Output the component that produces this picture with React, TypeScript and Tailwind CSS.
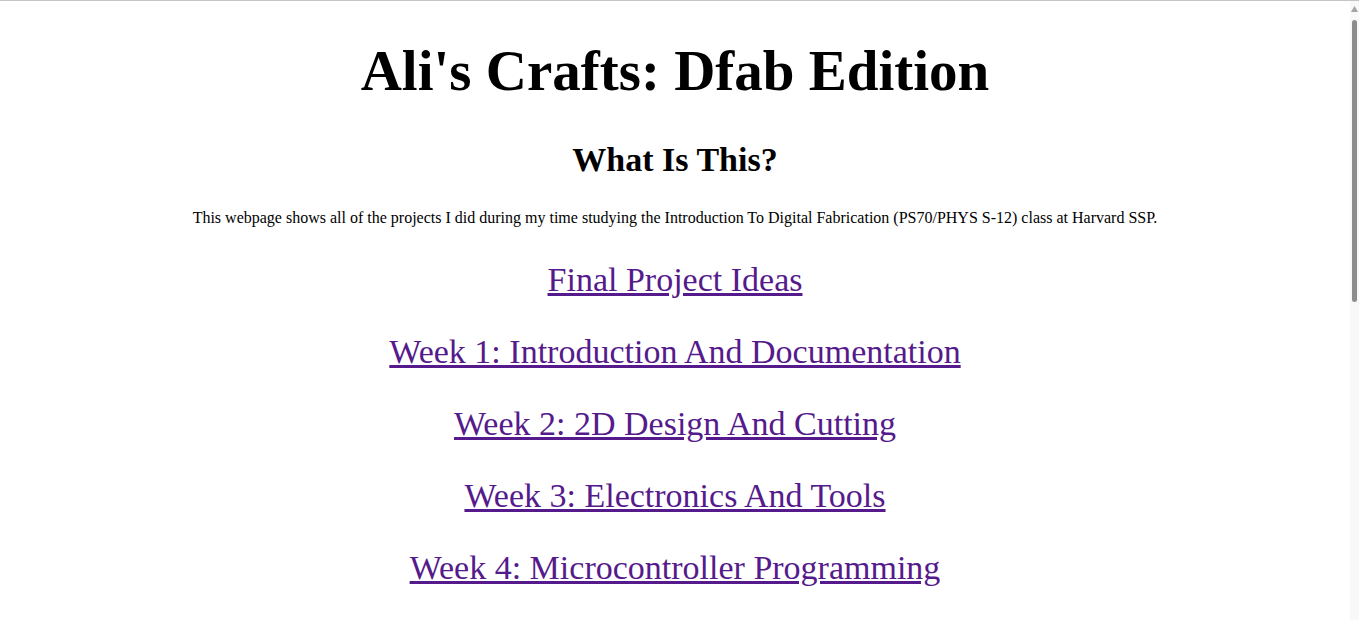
import React from 'react';

const links = [
  'Final Project Ideas',
  'Week 1: Introduction And Documentation',
  'Week 2: 2D Design And Cutting',
  'Week 3: Electronics And Tools',
  'Week 4: Microcontroller Programming',
];

export default function App() {
  return (
    <div className="h-[620px] overflow-hidden bg-white flex flex-col font-['Liberation_Serif','Times_New_Roman',serif] text-black">
      {/* browser edge line */}
      <div className="h-px bg-[#c4c4c4]" />
      <div className="flex flex-1 min-h-0">
        <main className="flex-1 text-center">
          <h1 className="mt-[34px] text-[57px] leading-[72px] font-bold">Ali's Crafts: Dfab Edition</h1>
          <h2 className="mt-[33px] text-[34px] leading-[40px] font-bold">What Is This?</h2>
          <p className="mt-[28px] text-[16px] leading-[20px]">
            This webpage shows all of the projects I did during my time studying the Introduction To Digital
            Fabrication (PS70/PHYS S-12) class at Harvard SSP.
          </p>
          <div className="mt-[32px] flex flex-col items-center gap-[32px]">
            {links.map(name => (
              <a key={name} href="#" className="text-[34px] leading-[40px] text-[#551a8b] underline">
                {name}
              </a>
            ))}
          </div>
        </main>
        {/* scrollbar */}
        <div className="w-[9px] bg-[#f8f8f8] flex flex-col items-center pt-[5px]">
          <svg width="7" height="6" viewBox="0 0 7 6">
            <path d="M3.5 0L7 6H0Z" fill="#a3a3a3" />
          </svg>
          <div className="mt-[8px] w-[5px] h-[282px] rounded-full bg-[#8c8c8c]" />
        </div>
      </div>
    </div>
  );
}
